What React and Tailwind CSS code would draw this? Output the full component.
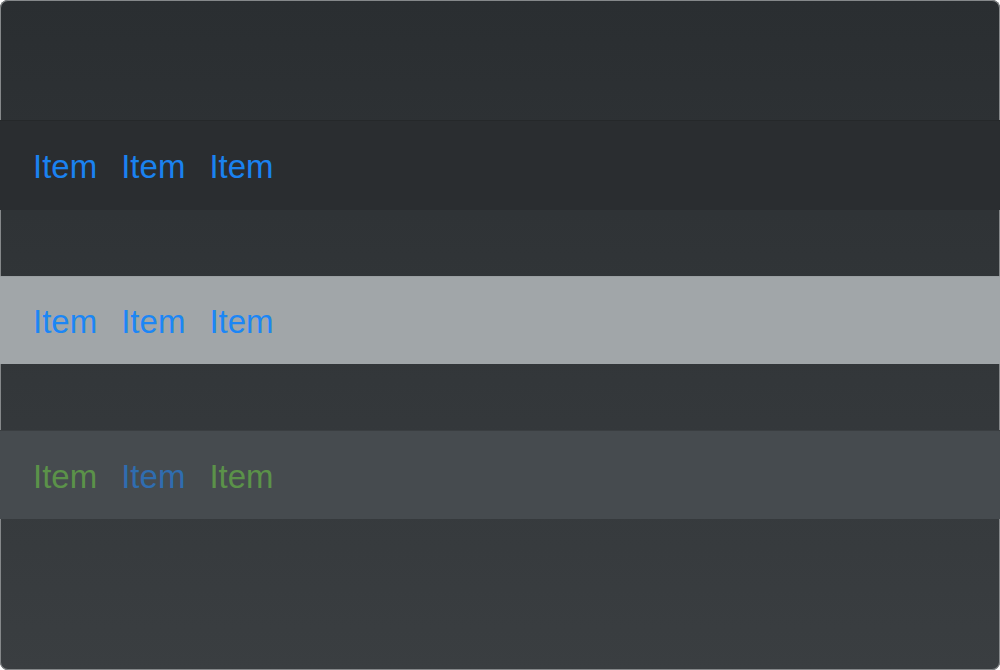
export default function App() {
  const rows = [
    {
      bar: "bg-[#2a2d30] border-t border-[#25282a]",
      items: ["text-[#1a82f0]", "text-[#1a82f0]", "text-[#1a82f0]"],
      h: "h-[90px]",
    },
    {
      bar: "bg-[#a1a6a9] border-t border-[#9a9fa2]",
      items: ["text-[#1c86f5]", "text-[#1c86f5]", "text-[#1c86f5]"],
      h: "h-[88px]",
    },
    {
      bar: "bg-[#464b4f] border-t border-[#3a3e41]",
      items: ["text-[#5b9249]", "text-[#2f6db0]", "text-[#5b9249]"],
      h: "h-[89px]",
    },
  ];

  return (
    <div className="w-[1000px] h-[670px] bg-white">
      <div className="w-full h-full rounded-[8px] shadow-[inset_0_0_0_1px_#85888a] bg-gradient-to-b from-[#2a2e31] to-[#3a3e41] overflow-hidden flex flex-col pt-[120px] gap-[66px] font-['Liberation_Sans',Arial,sans-serif]">
        {rows.map((row, i) => (
          <div key={i} className={`${row.bar} ${row.h} flex items-center gap-[24px] pl-[33px]`}>
            {row.items.map((c, j) => (
              <span key={j} className={`${c} text-[33px] leading-none pt-[2px]`}>
                Item
              </span>
            ))}
          </div>
        ))}
      </div>
    </div>
  );
}
